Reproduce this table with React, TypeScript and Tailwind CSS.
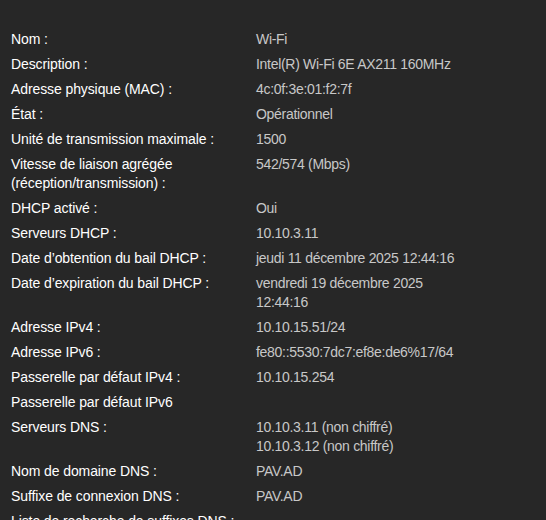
import React from "react";

const rows: [string, string[]][] = [
  ["Nom :", ["Wi-Fi"]],
  ["Description :", ["Intel(R) Wi-Fi 6E AX211 160MHz"]],
  ["Adresse physique (MAC) :", ["4c:0f:3e:01:f2:7f"]],
  ["État :", ["Opérationnel"]],
  ["Unité de transmission maximale :", ["1500"]],
  ["Vitesse de liaison agrégée (réception/transmission) :", ["542/574 (Mbps)"]],
  ["DHCP activé :", ["Oui"]],
  ["Serveurs DHCP :", ["10.10.3.11"]],
  ["Date d’obtention du bail DHCP :", ["jeudi 11 décembre 2025 12:44:16"]],
  ["Date d’expiration du bail DHCP :", ["vendredi 19 décembre 2025 12:44:16"]],
  ["Adresse IPv4 :", ["10.10.15.51/24"]],
  ["Adresse IPv6 :", ["fe80::5530:7dc7:ef8e:de6%17/64"]],
  ["Passerelle par défaut IPv4 :", ["10.10.15.254"]],
  ["Passerelle par défaut IPv6", []],
  ["Serveurs DNS :", ["10.10.3.11 (non chiffré)", "10.10.3.12 (non chiffré)"]],
  ["Nom de domaine DNS :", ["PAV.AD"]],
  ["Suffixe de connexion DNS :", ["PAV.AD"]],
  ["Liste de recherche de suffixes DNS :", []],
];

export default function App() {
  return (
    <div
      className="w-[546px] h-[520px] overflow-hidden bg-[#272727] text-[14px] leading-[19px]"
      style={{ fontFamily: '"Liberation Sans", Arial, sans-serif' }}
    >
      <div className="pt-[30px] pl-[11px] grid grid-cols-[230px_215px] gap-x-[15px] gap-y-[6px]">
        {rows.map(([label, values], i) => (
          <React.Fragment key={i}>
            <div className="text-white tracking-[-0.1px]">{label}</div>
            <div className="text-[#c8c8c8] tracking-[-0.3px] flex flex-col">
              {values.map((v, j) => (
                <div key={j}>{v}</div>
              ))}
            </div>
          </React.Fragment>
        ))}
      </div>
    </div>
  );
}
